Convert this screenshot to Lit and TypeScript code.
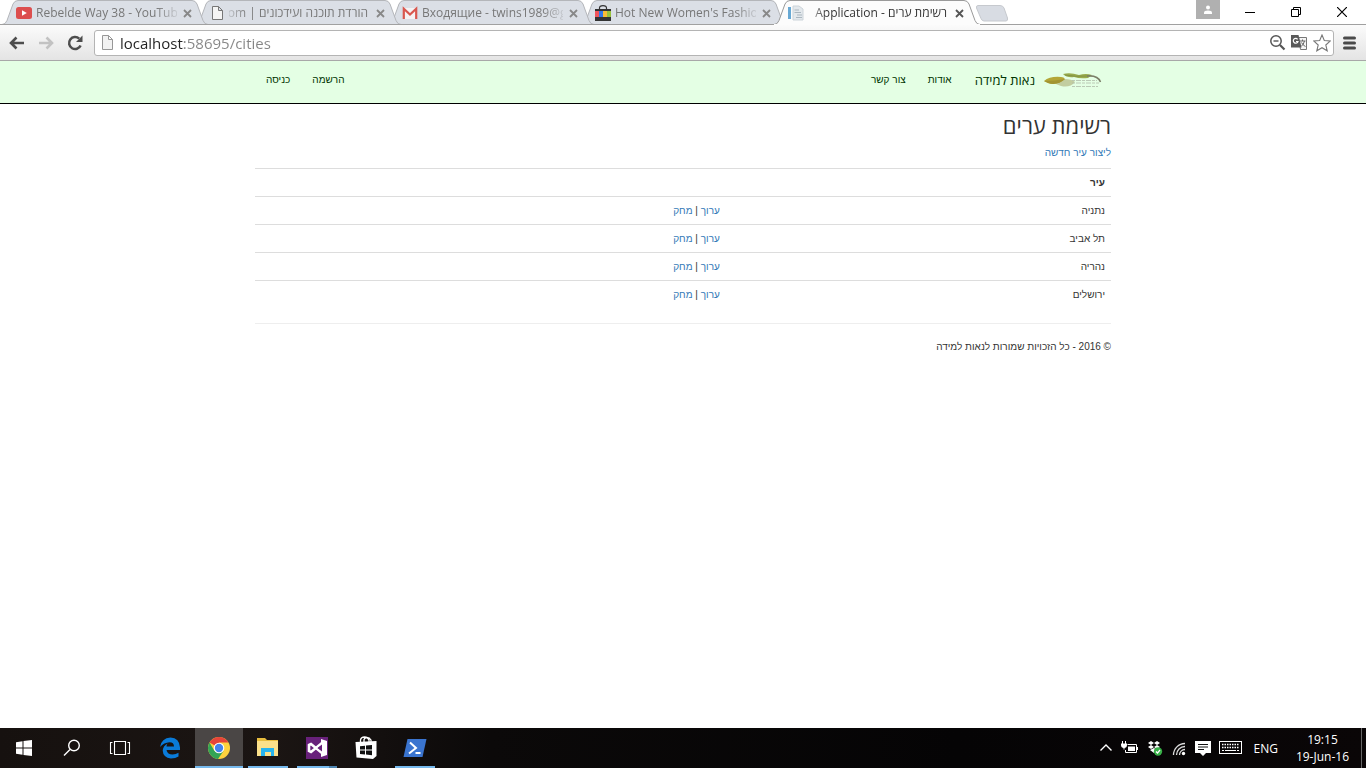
import { LitElement, html, svg, css, TemplateResult } from "lit";
import { customElement } from "lit/decorators.js";
import { classMap } from "lit/directives/class-map.js";

interface Tab {
  title: string;
  rtl?: boolean;
  active?: boolean;
  icon: TemplateResult;
}

const pageIcon = html`<svg width="16" height="16" viewBox="0 0 16 16">
  <path d="M3.5 1.5H9.5L13.5 5.5V14.5H3.5ZM9.5 1.5V5.5H13.5" fill="#f4f4f4" stroke="#777" />
</svg>`;

const tabs: Tab[] = [
  {
    title: "Rebelde Way 38 - YouTube",
    icon: html`<svg width="16" height="16" viewBox="0 0 16 16">
      <rect y="2" width="16" height="12" rx="2.5" fill="#dc4e4e" />
      <path d="M6 5.3L10.8 8L6 10.7Z" fill="#fff" />
    </svg>`,
  },
  { title: "הורדת תוכנה ועידכונים | om", rtl: true, icon: pageIcon },
  {
    title: "Входящие - twins1989@g",
    icon: html`<svg width="16" height="16" viewBox="0 0 16 16">
      <path d="M1 3H15V14H1Z" fill="#f5f2f2" />
      <path d="M1.8 14V3.8L8 9.5L14.2 3.8V14" fill="none" stroke="#d9574e" stroke-width="2.2" />
    </svg>`,
  },
  {
    title: "Hot New Women's Fashion",
    icon: html`<svg width="16" height="16" viewBox="0 0 16 16">
      <path d="M4.5 4V3Q4.5 .6 8 .6T11.5 3V4" fill="none" stroke="#333" stroke-width="1.2" />
      <path d="M0 4H16V16H0Z" fill="#333" />
      <path d="M0 6H4V12H0Z" fill="#f0555c" /><path d="M4 6H8V12H4Z" fill="#3478e8" />
      <path d="M8 6H12V12H8Z" fill="#f9bd36" /><path d="M12 6H16V12H12Z" fill="#98c23c" />
    </svg>`,
  },
  {
    title: "רשימת ערים - Application",
    rtl: true,
    active: true,
    icon: html`<svg width="16" height="16" viewBox="0 0 16 16">
      <path d="M0 2H3V14H0Z" fill="#68a9d4" />
      <path d="M5 1H11L15 4V15H5Z" fill="#e3e8ec" stroke="#ccd4da" />
      <path d="M6.5 5H11M6.5 7.5H13M8 12.5H14M9 10H14" stroke="#aab6bf" />
    </svg>`,
  },
];

const cities = ["נתניה", "תל אביב", "נהריה", "ירושלים"];

@customElement("browser-tab-strip")
class BrowserTabStrip extends LitElement {
  static styles = css`
    :host { display: flex; height: 25px; background: linear-gradient(#fff 24px, #a0a0a0 24px); font: 12px/24px "Open Sans", "Noto Sans", "Liberation Sans", sans-serif; }
    .tabs { display: flex; padding-left: 2px; flex: 1; min-width: 0; }
    .tab { display: grid; grid-template-columns: minmax(0, 1fr); width: 206px; height: 25px; margin-right: -13px; z-index: 1; flex: none; color: #777; }
    .tab.active { z-index: 9; color: #333; }
    .tab:nth-child(1) { z-index: 5; }
    .tab:nth-child(2) { z-index: 4; }
    .tab:nth-child(3) { z-index: 3; }
    .tab:nth-child(4) { z-index: 2; }
    .shape, .row { grid-area: 1 / 1; }
    .row { display: flex; align-items: center; padding: 2px 15px 0 14px; height: 22px; min-width: 0; z-index: 1; }
    .row svg { flex: none; }
    .title { flex: 1; min-width: 0; margin: 0 4px; overflow: hidden; white-space: nowrap; color: inherit; text-decoration: none; mask-image: linear-gradient(90deg, #000 120px, transparent 146px); }
    .title.rtl { direction: rtl; margin-right: 6px; mask-image: linear-gradient(270deg, #000 120px, transparent 146px); }
    button { border: 0; padding: 0; background: none; color: inherit; }
    .close { display: flex; flex: none; width: 12px; height: 12px; align-items: center; justify-content: center; }
    .new { align-self: flex-start; margin: 5px 0 0 8px; height: 17px; z-index: 1; }
    .new svg, .win svg, .user svg { display: block; }
    .user { width: 24px; height: 19px; background: #b0b0b0; margin-right: 7px; display: flex; justify-content: center; align-items: center; }
    .win { width: 46px; height: 24px; display: flex; justify-content: center; align-items: center; }
    .controls { display: flex; padding-right: 1px; }
  `;

  render() {
    return html`
      <nav class="tabs" aria-label="Tabs">
        ${tabs.map(
          (t) => html`<div class=${classMap({ tab: true, active: !!t.active })}>
            <svg class="shape" width="206" height="25" viewBox="0 0 206 25">
              <path d="M0 24.5Q3.5 24.5 5 20.5L11 4Q12.5 .5 16 .5H190Q193.5 .5 195 4L201 20.5Q202.5 24.5 206 24.5"
                fill=${t.active ? "#fcfcfc" : "#dbdfe6"} stroke=${t.active ? "#9a9a9a" : "#b4b6ba"} />
              <path d="M0 24.5H206" stroke=${t.active ? "#fcfcfc" : "#a0a0a0"} />
            </svg>
            <div class="row">
              ${t.icon}
              <a href="#" class=${classMap({ title: true, rtl: !!t.rtl })}>${t.title}</a>
              <button class="close" aria-label="Close tab">
                <svg width="9" height="9" viewBox="0 0 9 9"><path d="M1 1L8 8M8 1L1 8" stroke=${t.active ? "#555" : "#888"} stroke-width="1.8" /></svg>
              </button>
            </div>
          </div>`
        )}
        <button class="new" aria-label="New tab">
          <svg width="34" height="17" viewBox="0 0 34 17">
            <path d="M3 .5H25Q28 .5 29 3L32.5 13Q33 16 31 16H9Q7 16 6 13.5L1.5 3Q1 .5 3 .5Z" fill="#d8dce3" stroke="#c6c9ce" />
          </svg>
        </button>
      </nav>
      <div class="controls">
        <button class="user" aria-label="User">
          <svg width="10" height="10" viewBox="0 0 10 10"><circle cx="5" cy="2.6" r="2" fill="#fff" /><path d="M1 9V7.5Q1 5.5 5 5.5T9 7.5V9Z" fill="#fff" /></svg>
        </button>
        <button class="win" aria-label="Minimize">
          <svg width="10" height="10"><path d="M0 5.5H10" stroke="#000" /></svg>
        </button>
        <button class="win" aria-label="Restore">
          <svg width="10" height="10"><path d="M.5 2.5H7.5V9.5H.5ZM2.5 2.5V.5H9.5V7.5H7.5" fill="none" stroke="#000" /></svg>
        </button>
        <button class="win" aria-label="Close">
          <svg width="10" height="10"><path d="M0 0L10 10M10 0L0 10" stroke="#000" stroke-width="1.2" /></svg>
        </button>
      </div>
    `;
  }
}

@customElement("browser-toolbar")
class BrowserToolbar extends LitElement {
  static styles = css`
    :host { display: flex; align-items: center; height: 35px; padding: 0 9px 0 7px; background: linear-gradient(#fbfbfb, #e4e4e4); border-bottom: 1px solid #a8a8a8; }
    button { border: 0; padding: 0; background: none; display: flex; align-items: center; justify-content: center; }
    .nav { width: 20px; height: 20px; margin-right: 9px; }
    .omnibox { flex: 1; min-width: 0; display: flex; align-items: center; gap: 5px; height: 24px; padding: 0 2px 0 5px; border: 1px solid #b4b4b4; border-radius: 3px; background: #fff; }
    .url { flex: 1; min-width: 0; border: 0; padding: 0; outline: 0; height: 22px; font: 15px/22px "Open Sans", "Noto Sans", sans-serif; background: linear-gradient(90deg, #222 64px, #858585 64px) text; -webkit-text-fill-color: transparent; }
    .menu { width: 16px; height: 20px; margin-left: 7px; }
  `;

  render() {
    return html`
      <button class="nav" aria-label="Back">
        <svg width="18" height="16" viewBox="0 0 18 16"><path d="M16 8H3M8.5 2.5L3 8L8.5 13.5" fill="none" stroke="#4d4d4d" stroke-width="2.6" /></svg>
      </button>
      <button class="nav" aria-label="Forward">
        <svg width="18" height="16" viewBox="0 0 18 16"><path d="M2 8H15M9.5 2.5L15 8L9.5 13.5" fill="none" stroke="#c2c2c2" stroke-width="2.6" /></svg>
      </button>
      <button class="nav" aria-label="Reload">
        <svg width="18" height="18" viewBox="0 0 18 18"><path d="M14.6 11.5A6 6 0 1 1 13.2 4.7" fill="none" stroke="#4d4d4d" stroke-width="2.5" /><path d="M16.5 1.5V8H10Z" fill="#4d4d4d" /></svg>
      </button>
      <div class="omnibox">
        <svg width="15" height="18" viewBox="0 0 15 18"><path d="M2.5 1.5H8.5L12.5 5.5V15.5H2.5ZM8.5 1.5V5.5H12.5" fill="#f2f2f2" stroke="#979797" /></svg>
        <input class="url" aria-label="Address" value="localhost:58695/cities" />
        <button aria-label="Zoom">
          <svg width="17" height="17" viewBox="0 0 17 17"><circle cx="7" cy="7" r="5.2" fill="none" stroke="#555" stroke-width="1.5" /><path d="M4.5 7H9.5" stroke="#555" stroke-width="1.4" /><path d="M11 11L15.5 15.5" stroke="#555" stroke-width="2.2" /></svg>
        </button>
        <button aria-label="Translate">
          <svg width="17" height="17" viewBox="0 0 17 17">
            <path d="M7.5 3.5H15.5V15.5H9.5Z" fill="#f5f5f5" stroke="#777" /><path d="M0 1H7.5L10.5 13.5H0Z" fill="#5a5a5a" />
            <path d="M6.6 5.3A2.4 2.4 0 1 0 7 7.5H5" fill="none" stroke="#fff" stroke-width="1.2" />
            <path d="M9 7H14.5M11.5 5.5V7M13.5 7Q12.5 11 10 12.5M10.5 8.5Q12 11.5 14.5 12.5" fill="none" stroke="#666" />
          </svg>
        </button>
        <button aria-label="Bookmark">
          <svg width="18" height="18" viewBox="0 0 18 18"><path d="M9 1L11.3 6.5L17.3 7L12.8 11L14.2 16.8L9 13.7L3.8 16.8L5.2 11L.7 7L6.7 6.5Z" fill="#fff" stroke="#777" stroke-width="1.1" /></svg>
        </button>
      </div>
      <button class="menu" aria-label="Menu">
        <svg width="13" height="14" viewBox="0 0 13 14"><path d="M1.5 2H11.5M1.5 7H11.5M1.5 12H11.5" stroke="#4a4a4a" stroke-width="3" stroke-linecap="round" /></svg>
      </button>
    `;
  }
}

@customElement("cities-page")
class CitiesPage extends LitElement {
  static styles = css`
    :host { display: block; direction: rtl; background: #fff; color: #333; font: 10px/15px "Liberation Sans", sans-serif; }
    a { color: #337ab7; text-decoration: none; }
    .container { box-sizing: border-box; max-width: 878px; margin: 0 auto; padding: 0 11px; }
    .navbar { background: #e4ffe4; border-bottom: 1px solid #000; }
    .bar { display: flex; height: 42px; }
    .bar a { color: #030; padding: 11px; }
    .bar .brand { display: flex; align-items: center; gap: 8px; padding: 0 8px 4px 12px; font-family: "Open Sans", sans-serif; font-size: 13px; }
    .left { margin-inline-start: auto; display: flex; }
    h2 { margin: 9px 0 8px; font-family: "Open Sans", sans-serif; font-size: 22px; line-height: 24px; font-weight: 400; }
    p { margin: 0 0 8px; }
    table { width: 100%; border-collapse: separate; border-spacing: 0; }
    th, td { padding: 6px; border-top: 1px solid #ddd; text-align: start; }
    .name { width: 45%; }
    hr { border: 0; border-top: 1px solid #eee; margin: 15px 0; }
  `;

  render() {
    return html`
      <header class="navbar">
        <nav class="container bar">
          <a class="brand" href="#">
            <svg width="60" height="18" viewBox="0 0 60 18" aria-hidden="true">
              <path d="M21 8Q29 8 32 11Q27 17 18 15Q12 13 12 12Z" fill="#c2cda0" />
              <path d="M1 10Q7 5 18 6Q21 6 22 8Q14 15 5 12Z" fill="#b4a637" />
              <path d="M1 10Q12 10 22 8Q14 15 5 12Z" fill="#a29432" />
              <path d="M20 3Q27 1 36 4Q43 2 49 4L45 7Q37 8 31 6Q24 7 20 3Z" fill="#98ac4c" />
              <path d="M22 4Q32 6 45 5" fill="none" stroke="#7d8c40" stroke-width=".8" />
              <path d="M44 5Q55 4 57.5 11" fill="none" stroke="#7b7f68" stroke-width="1.5" />
              <path d="M29 9.5H54M29 12H56M29 15.5H55" stroke="#b0bdaa" stroke-width=".8" stroke-dasharray="3 1 5 1" />
            </svg>
            <span>נאות למידה</span>
          </a>
          <a href="#">אודות</a>
          <a href="#">צור קשר</a>
          <div class="left"><a href="#">הרשמה</a><a href="#">כניסה</a></div>
        </nav>
      </header>
      <main class="container">
        <h2>רשימת ערים</h2>
        <p><a href="#">ליצור עיר חדשה</a></p>
        <table>
          <thead>
            <tr><th class="name">עיר</th><th></th></tr>
          </thead>
          <tbody>
            ${cities.map((c) => html`<tr><td>${c}</td><td><a href="#">ערוך</a> | <a href="#">מחק</a></td></tr>`)}
          </tbody>
        </table>
        <hr />
        <footer><p>© 2016 - כל הזכויות שמורות לנאות למידה</p></footer>
      </main>
    `;
  }
}

const apps = [
  { label: "Start", state: "", art: svg`<path d="M4 6.2L10.5 5.3V11.5H4ZM11.5 5.1L20 4V11.5H11.5ZM4 12.5H10.5V18.7L4 17.8ZM11.5 12.5H20V20L11.5 18.9Z" fill="#fff"/>` },
  { label: "Search", state: "", art: svg`<circle cx="14" cy="9.5" r="5.3" fill="none" stroke="#fff" stroke-width="1.4"/><path d="M10 13.5L4 19.5" stroke="#fff" stroke-width="1.5"/>` },
  { label: "Task view", state: "", art: svg`<path d="M6.5 5.5H17.5V18.5H6.5ZM4.5 6.5H2.5V17.5H4.5M19.5 6.5H21.5V17.5H19.5" fill="none" stroke="#fff" stroke-width="1.1"/>` },
  { label: "Edge", state: "", art: svg`<path d="M2 11Q3.5 2 12.5 1.5Q21.5 2 22 11.5V14H8.5Q9.5 18.5 14.5 18.5Q18 18.5 20.5 16.7V20.5Q17.5 22.5 13 22.5Q5 21.5 4.7 14.5Q5 10 9.5 7.5Q8.5 9 8.5 10.5H16Q16 6.2 11.5 6.2Q6 6.5 2 11Z" fill="#0a7bd9"/>` },
  { label: "Chrome", state: "active", art: svg`<circle cx="12" cy="12" r="11" fill="#fdd23e"/><path d="M12 12L2.5 6.5A11 11 0 0 1 21.5 6.5H12Z" fill="#e5443a"/><path d="M2.5 6.5A11 11 0 0 0 11 23L16.5 15L12 12L7.5 15Z" fill="#33a456"/><circle cx="12" cy="12" r="5.3" fill="#fff"/><circle cx="12" cy="12" r="4.2" fill="#4483ed"/>` },
  { label: "Explorer", state: "open", art: svg`<path d="M1 2H9L11 4H22V20H1Z" fill="#e8bd3e"/><path d="M1 5H22V20H1Z" fill="#fbe08a"/><path d="M5 12H18V20H15V16H9V20H5Z" fill="#27b4ee"/>` },
  { label: "Visual Studio", state: "open multi", art: svg`<path d="M1 1H23V23H1Z" fill="#68217a"/><path d="M4 9L6 8L17 17V7L6 16L4 15Z" fill="none" stroke="#fff" stroke-width="2.6"/><path d="M16 3L22 5V19L16 21Z" fill="#fff"/><path d="M17 8.5V15.5L12.5 12Z" fill="#68217a"/>` },
  { label: "Store", state: "", art: svg`<path d="M1.5 6L22.5 5V20L19 23L2.5 21.5Z" fill="#fff"/><path d="M6.5 6V4Q7 1 10.5 1T15 4V6M10 6V3.5Q10.5 1.5 13 1.5T17 4V6" fill="none" stroke="#fff" stroke-width="1.3"/><path d="M6 10.2L11 9.7V13.5H6ZM12 9.6L18 9V13.5H12ZM6 14.5H11V18.5L6 18ZM12 14.5H18V19.2L12 18.6Z" fill="#111"/>` },
  { label: "PowerShell", state: "open", art: svg`<path d="M4.5 3H23.5L19.5 21H.5Z" fill="#3a74cf"/><path d="M7 6.5L13 12L6 17.5M12.5 17H17.5" fill="none" stroke="#fff" stroke-width="2"/>` },
];

@customElement("task-bar")
class TaskBar extends LitElement {
  static styles = css`
    :host { display: flex; height: 40px; color: #fff; background: linear-gradient(90deg, #16110f, #1b1513 20%, #0b0909 36%, #050405 70%, #0a0607); font: 12px/17px "Open Sans", "Noto Sans", sans-serif; }
    button { border: 0; padding: 0; background: none; color: inherit; font: inherit; display: flex; align-items: center; justify-content: center; flex: none; }
    .apps { display: flex; gap: 1px; flex: 1; }
    .app { width: 48px; }
    .app:nth-child(-n + 2) { margin-right: -1px; }
    .app:nth-child(3) { margin-right: 1px; }
    .active { background: linear-gradient(#4a4645 38px, #76b9ed 38px); }
    .open { background: linear-gradient(#76b9ed, #76b9ed) center bottom / 40px 2px no-repeat; }
    .multi { background-image: linear-gradient(90deg, #76b9ed 32px, #4f86b2 32px); }
    .tray { display: flex; align-items: center; gap: 8px; }
    .clock { flex-direction: column; margin: 0 4px 0 10px; }
    .peek { width: 5px; height: 40px; border-left: 1px solid #666; }
  `;

  render() {
    return html`
      <div class="apps">
        ${apps.map((a) => html`<button class="app ${a.state}" aria-label=${a.label}><svg width="24" height="24" viewBox="0 0 24 24">${a.art}</svg></button>`)}
      </div>
      <div class="tray">
        <button aria-label="Show hidden icons"><svg width="14" height="16" viewBox="0 0 14 16"><path d="M1.5 10.5L7 5L12.5 10.5" fill="none" stroke="#fff" stroke-width="1.4" /></svg></button>
        <button aria-label="Battery"><svg width="18" height="16" viewBox="0 0 18 16"><path d="M6.5 4.5H15.5V12.5H4.5V10M16.5 7V10M3 7V9.5" fill="none" stroke="#fff" /><path d="M7 6.5H14V11H7ZM0 3.5H6V5Q6 8 3 8T0 5ZM1 1H2V4H1ZM4 1H5V4H4Z" fill="#fff" /></svg></button>
        <button aria-label="Dropbox"><svg width="16" height="16" viewBox="0 0 16 16"><path d="M4 1L7 3L4 5L1 3ZM10 1L13 3L10 5L7 3ZM4 5L7 7L4 9L1 7ZM10 5L13 7L10 9L7 7ZM3 10L7 8L11 10L7 13Z" fill="#fff" /><circle cx="11" cy="11.5" r="4.2" fill="#38b048" /><path d="M9 11.5L10.5 13L13 10" fill="none" stroke="#fff" stroke-width="1.2" /></svg></button>
        <button aria-label="Network"><svg width="16" height="16" viewBox="0 0 16 16"><path d="M2.5 15A11.5 11.5 0 0 1 14 3.5M5.5 15A8.5 8.5 0 0 1 14 6.5M8.5 15A5.5 5.5 0 0 1 14 9.5" fill="none" stroke="#ddd" stroke-width="1.3" /><circle cx="12.5" cy="13.5" r="1.7" fill="#fff" /></svg></button>
        <button aria-label="Notifications"><svg width="16" height="18" viewBox="0 0 16 18"><path d="M0 2H16V14H11L8 17L5 14H0Z" fill="#fff" /><path d="M3 5.5H13M3 8H13M3 10.5H9" stroke="#111" /></svg></button>
        <button aria-label="Touch keyboard"><svg width="23" height="14" viewBox="0 0 23 14"><rect x=".5" y=".5" width="22" height="12" fill="none" stroke="#fff" /><path d="M3 3.5H20M3 6.5H20" stroke="#fff" stroke-width="1.3" stroke-dasharray="1.5 1" /><path d="M3 9.5H5M6 9.5H17M18 9.5H20" stroke="#fff" /></svg></button>
        <button>&nbsp;ENG</button>
        <button class="clock"><span>19:15</span><span>19-Jun-16</span></button>
        <button class="peek" aria-label="Show desktop"></button>
      </div>
    `;
  }
}

@customElement("app-root")
class AppRoot extends LitElement {
  static styles = css`
    :host { display: flex; flex-direction: column; min-height: 100vh; background: #fff; }
    .page { flex: 1; }
  `;

  render() {
    return html`
      <browser-tab-strip></browser-tab-strip>
      <browser-toolbar></browser-toolbar>
      <cities-page class="page"></cities-page>
      <task-bar></task-bar>
    `;
  }
}
